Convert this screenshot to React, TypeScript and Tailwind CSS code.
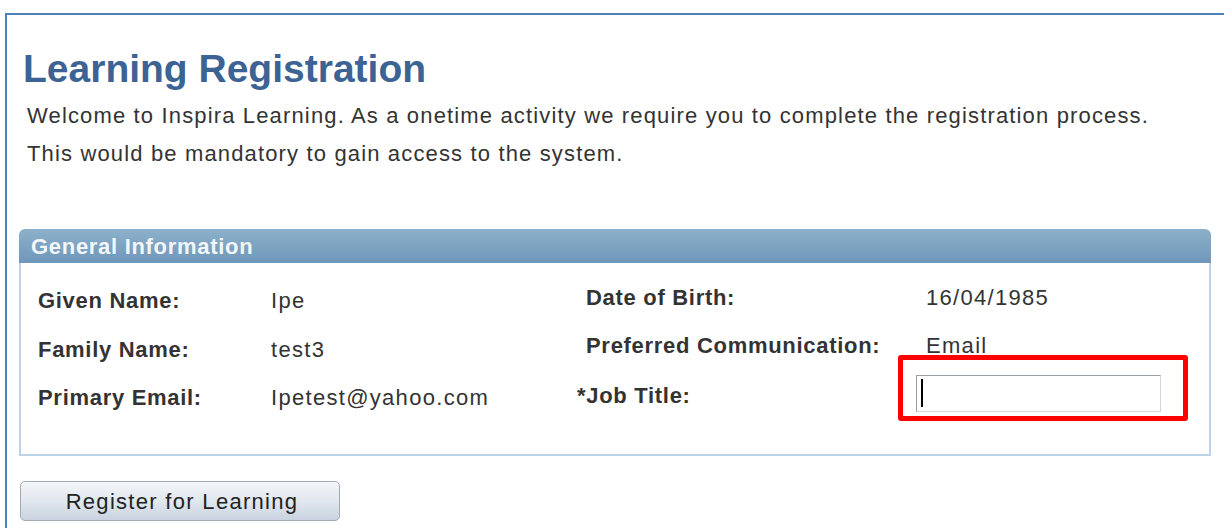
import type { ReactNode } from "react"

const font = { fontFamily: '"Liberation Sans", Arial, Helvetica, sans-serif' }

type Row = { label: ReactNode; value: ReactNode; h: string }

function Label({ children }: { children: ReactNode }) {
  return <span className="text-[22px] leading-[30px] font-bold tracking-[0.7px] text-[#333]">{children}</span>
}

function Value({ children }: { children: ReactNode }) {
  return <span className="text-[22px] leading-[30px] tracking-[1.3px] text-[#333]">{children}</span>
}

function JobTitleInput() {
  return (
    <div className="relative -ml-[10px] mb-[6px]">
      <div className="w-[245px] h-[37px] border border-[#9aa0a6] border-r-[#d4d4d4] border-b-[#d4d4d4] bg-white flex items-center pl-[4px]">
        <span className="w-[2px] h-[28px] bg-black" />
      </div>
      <div className="absolute -left-[18px] -top-[20px] w-[290px] h-[66px] border-[5px] border-[#ff0000] rounded-[3px]" />
    </div>
  )
}

const left: Row[] = [
  { label: "Given Name:", value: "Ipe", h: "h-[50px]" },
  { label: "Family Name:", value: "test3", h: "h-[48px]" },
  { label: "Primary Email:", value: "Ipetest@yahoo.com", h: "h-[48px]" },
]

const right: Row[] = [
  { label: "Date of Birth:", value: "16/04/1985", h: "h-[47px]" },
  { label: "Preferred Communication:", value: "Email", h: "h-[50px]" },
  { label: <span className="-ml-[9px]">*Job Title:</span>, value: <JobTitleInput />, h: "h-[50px]" },
]

export default function App() {
  return (
    <div className="w-[1224px] h-[528px] overflow-hidden bg-white" style={font}>
      <div className="ml-[5px] mt-[13px] h-[540px] border-t-2 border-l-2 border-[#4f81bd] pl-[12px] pt-[31px]">
        <h1 className="ml-[4px] text-[39px] leading-[45px] font-bold text-[#3d6394]">Learning Registration</h1>
        <p className="ml-[8px] mt-[6px] text-[22px] leading-[38px] tracking-[1.15px] text-[#333]">
          Welcome to Inspira Learning. As a onetime activity we require you to complete the registration process.
          <br />
          This would be mandatory to gain access to the system.
        </p>

        <div className="mt-[56px] w-[1192px]">
          <div className="h-[34px] rounded-t-[6px] bg-gradient-to-b from-[#8db1ca] to-[#6f96ba] flex items-center pl-[12px]">
            <span className="text-[22px] font-bold tracking-[0.7px] text-[#f4f7fa]">General Information</span>
          </div>
          <div className="h-[193px] border-2 border-t-0 border-[#bcd3e9] flex pl-[17px]">
            <div className="w-[548px] pt-[13px]">
              {left.map((r, i) => (
                <div key={i} className={`flex items-center ${r.h}`}>
                  <div className="w-[233px]"><Label>{r.label}</Label></div>
                  <Value>{r.value}</Value>
                </div>
              ))}
            </div>
            <div className="pt-[11px]">
              {right.map((r, i) => (
                <div key={i} className={`flex items-center ${r.h}`}>
                  <div className="w-[340px]"><Label>{r.label}</Label></div>
                  <Value>{r.value}</Value>
                </div>
              ))}
            </div>
          </div>
        </div>

        <button className="mt-[25px] ml-[1px] w-[320px] h-[40px] rounded-[5px] border border-[#a3aab4] bg-gradient-to-b from-[#f3f6fa] via-[#e1e7ee] to-[#c9d3df] pl-[4px] text-[22px] tracking-[1.3px] text-[#222]">
          Register for Learning
        </button>
      </div>
    </div>
  )
}
